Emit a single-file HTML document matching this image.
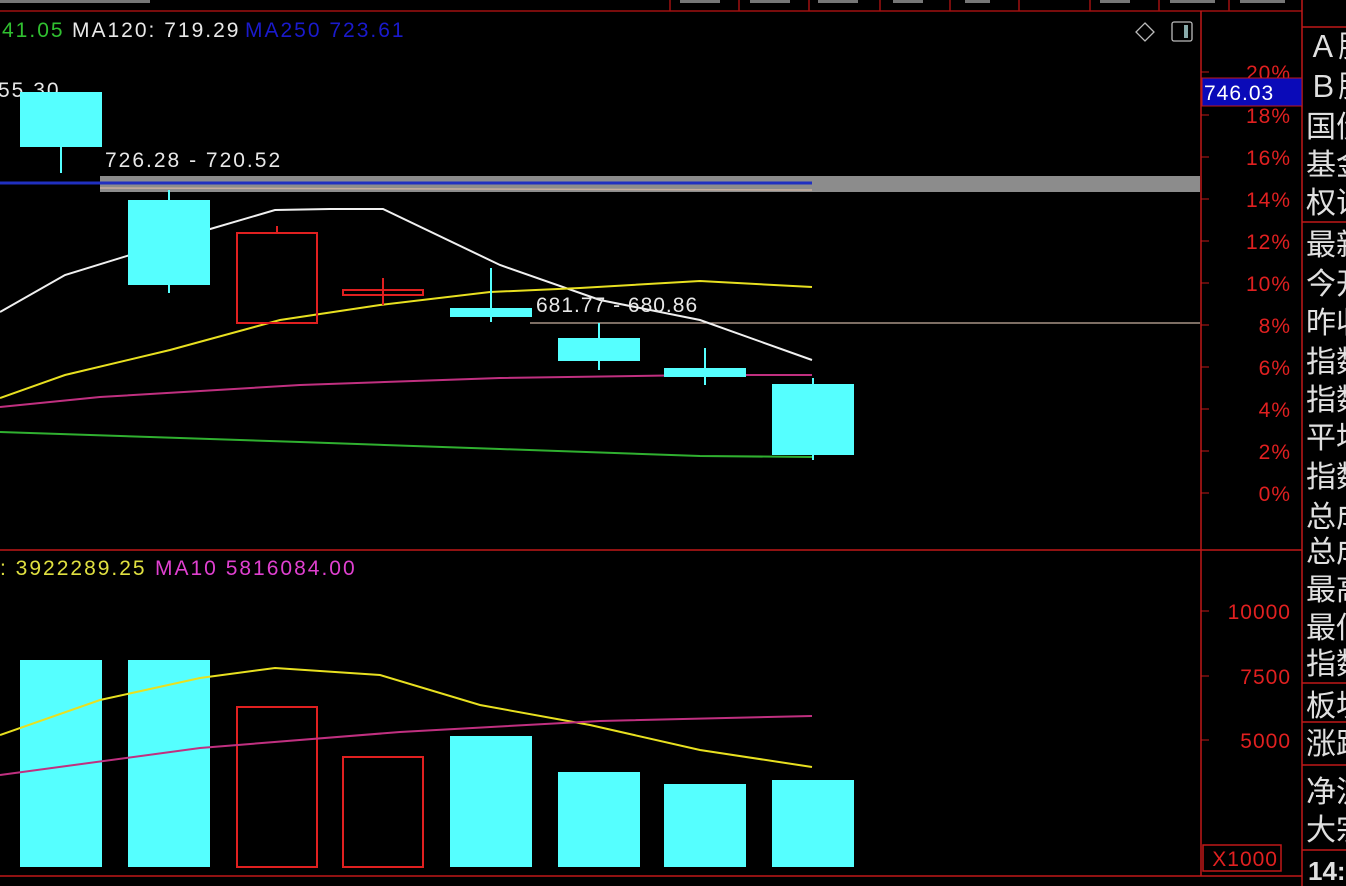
<!DOCTYPE html>
<html><head><meta charset="utf-8"><style>
html,body{margin:0;padding:0;background:#000;width:1346px;height:886px;overflow:hidden}
svg{display:block}
text{font-family:"Liberation Sans","Noto Sans CJK SC",sans-serif}
.ls{letter-spacing:2px}
</style></head><body>
<svg width="1346" height="886" viewBox="0 0 1346 886" xmlns="http://www.w3.org/2000/svg">
<rect width="1346" height="886" fill="#000"/>
<g stroke="#a01010" stroke-width="1.5">
<line x1="0" y1="11" x2="1302" y2="11"/>
<line x1="670" y1="0" x2="670" y2="11"/><line x1="739" y1="0" x2="739" y2="11"/>
<line x1="809" y1="0" x2="809" y2="11"/><line x1="880" y1="0" x2="880" y2="11"/>
<line x1="950" y1="0" x2="950" y2="11"/><line x1="1019" y1="0" x2="1019" y2="11"/>
<line x1="1090" y1="0" x2="1090" y2="11"/><line x1="1159" y1="0" x2="1159" y2="11"/>
<line x1="1229" y1="0" x2="1229" y2="11"/>
</g>
<g fill="#777"><rect x="680" y="0" width="40" height="3"/><rect x="750" y="0" width="40" height="3"/><rect x="818" y="0" width="40" height="3"/><rect x="893" y="0" width="30" height="3"/><rect x="965" y="0" width="25" height="3"/><rect x="1100" y="0" width="30" height="3"/><rect x="1170" y="0" width="45" height="3"/><rect x="1240" y="0" width="45" height="3"/><rect x="0" y="0" width="150" height="3"/></g>
<g stroke="#c01818" stroke-width="1.5" fill="none">
<line x1="1201" y1="11" x2="1201" y2="876"/>
<line x1="1302" y1="0" x2="1302" y2="886"/>
<line x1="0" y1="550" x2="1302" y2="550"/>
<line x1="0" y1="876" x2="1302" y2="876"/>
<line x1="1302" y1="27" x2="1346" y2="27"/>
<line x1="1302" y1="222" x2="1346" y2="222"/>
<line x1="1302" y1="683" x2="1346" y2="683"/>
<line x1="1302" y1="722" x2="1346" y2="722"/>
<line x1="1302" y1="765" x2="1346" y2="765"/>
<line x1="1302" y1="850" x2="1346" y2="850"/>
<rect x="1203" y="845" width="78" height="26"/>
</g>
<g stroke="#c01818" stroke-width="1">
<line x1="1201" y1="72" x2="1209" y2="72"/><line x1="1201" y1="115" x2="1209" y2="115"/><line x1="1201" y1="157" x2="1209" y2="157"/><line x1="1201" y1="199" x2="1209" y2="199"/><line x1="1201" y1="241" x2="1209" y2="241"/><line x1="1201" y1="283" x2="1209" y2="283"/><line x1="1201" y1="325" x2="1209" y2="325"/><line x1="1201" y1="367" x2="1209" y2="367"/><line x1="1201" y1="409" x2="1209" y2="409"/><line x1="1201" y1="451" x2="1209" y2="451"/><line x1="1201" y1="493" x2="1209" y2="493"/>
<line x1="1201" y1="611" x2="1209" y2="611"/><line x1="1201" y1="676" x2="1209" y2="676"/><line x1="1201" y1="740" x2="1209" y2="740"/>
</g>
<g fill="#e02020" font-size="21" text-anchor="end" letter-spacing="1">
<text x="1291" y="80">20%</text><text x="1291" y="123">18%</text><text x="1291" y="165">16%</text><text x="1291" y="207">14%</text><text x="1291" y="249">12%</text><text x="1291" y="291">10%</text><text x="1291" y="333">8%</text><text x="1291" y="375">6%</text><text x="1291" y="417">4%</text><text x="1291" y="459">2%</text><text x="1291" y="501">0%</text>
<text x="1291" y="619">10000</text><text x="1291" y="684">7500</text><text x="1291" y="748">5000</text>
<text x="1278" y="866">X1000</text>
</g>
<rect x="1202" y="78" width="100" height="28" fill="#0a0ab8" stroke="#c01818"/>
<text x="1204" y="100" fill="#fff" font-size="21" letter-spacing="1">746.03</text>
<text x="2" y="37" font-size="21" fill="#30c030" class="ls">41.05</text>
<text x="72" y="37" font-size="21" fill="#e8e8e8" class="ls">MA120: 719.29</text>
<text x="245" y="37" font-size="21" fill="#1a1acc" class="ls">MA250  723.61</text>
<path d="M1145 23 L1154 32 L1145 41 L1136 32 Z" stroke="#bbb" fill="none" stroke-width="1.3"/>
<rect x="1172" y="22" width="20" height="19" rx="2" stroke="#bbb" fill="none" stroke-width="1.3"/>
<rect x="1184" y="25" width="4" height="13" fill="#8aa"/>
<text x="0" y="575" font-size="21" fill="#e0e040" class="ls">: 3922289.25</text>
<text x="155" y="575" font-size="21" fill="#e040d0" class="ls">MA10  5816084.00</text>
<text x="-2" y="97" font-size="21" fill="#e8e8e8" class="ls">55.30</text>
<text x="105" y="167" font-size="21" fill="#e8e8e8" class="ls">726.28 - 720.52</text>
<rect x="100" y="176" width="1100" height="16" fill="#8c8c8c"/>
<line x1="0" y1="183" x2="812" y2="183" stroke="#2030c0" stroke-width="3"/>
<line x1="100" y1="188" x2="812" y2="190" stroke="#c8b0a0" stroke-width="1.5"/>
<line x1="530" y1="323" x2="1200" y2="323" stroke="#c8b0a0" stroke-width="1.3"/>
<g fill="none" stroke-width="2">
<polyline stroke="#f0f0f0" points="0,312 65,275 130,255 200,232 275,210 330,209 383,209 500,265 600,300 700,320 812,360"/>
<polyline stroke="#e8e020" points="0,398 65,375 170,350 280,320 380,305 490,292 580,288 700,281 812,287"/>
<polyline stroke="#c03080" points="0,407 100,397 300,385 500,378 700,375 812,375"/>
<polyline stroke="#30b030" points="0,432 150,437 300,442 500,449 700,456 812,457"/>
</g>
<g stroke="#5ff" stroke-width="2"><line x1="61" y1="147" x2="61" y2="173"/><line x1="169" y1="190" x2="169" y2="293"/><line x1="491" y1="268" x2="491" y2="322"/><line x1="599" y1="323" x2="599" y2="370"/><line x1="705" y1="348" x2="705" y2="385"/><line x1="813" y1="378" x2="813" y2="460"/></g>
<g fill="#5ff">
<rect x="20" y="92" width="82" height="55"/><rect x="128" y="200" width="82" height="85"/>
<rect x="450" y="308" width="82" height="9"/><rect x="558" y="338" width="82" height="23"/>
<rect x="664" y="368" width="82" height="9"/><rect x="772" y="384" width="82" height="71"/>
</g>
<g stroke="#e02020" stroke-width="2" fill="none">
<rect x="237" y="233" width="80" height="90"/><line x1="277" y1="226" x2="277" y2="233"/>
<rect x="343" y="290" width="80" height="5"/><line x1="383" y1="278" x2="383" y2="305"/>
</g>
<text x="536" y="312" font-size="21" fill="#e8e8e8" letter-spacing="1">681.77 - 680.86</text>
<g fill="#5ff">
<rect x="20" y="660" width="82" height="207"/><rect x="128" y="660" width="82" height="207"/>
<rect x="450" y="736" width="82" height="131"/><rect x="558" y="772" width="82" height="95"/>
<rect x="664" y="784" width="82" height="83"/><rect x="772" y="780" width="82" height="87"/>
</g>
<g stroke="#e02020" stroke-width="2" fill="none">
<rect x="237" y="707" width="80" height="160"/><rect x="343" y="757" width="80" height="110"/>
</g>
<g fill="none" stroke-width="2">
<polyline stroke="#e8e020" points="0,735 100,700 200,678 275,668 380,675 480,705 590,725 700,750 812,767"/>
<polyline stroke="#c03080" points="0,775 200,748 400,732 600,721 812,716"/>
</g>
<g fill="#e0e0e0" font-size="30">
<text x="1308" y="57">Ａ股</text><text x="1308" y="97">Ｂ股</text><text x="1306" y="137">国债</text><text x="1306" y="175">基金</text><text x="1306" y="213">权证</text>
<text x="1306" y="255">最新</text><text x="1306" y="294">今开</text><text x="1306" y="333">昨收</text><text x="1306" y="372">指数</text><text x="1306" y="410">指数</text>
<text x="1306" y="448">平均</text><text x="1306" y="487">指数</text><text x="1306" y="527">总成</text><text x="1306" y="562">总成</text><text x="1306" y="600">最高</text>
<text x="1306" y="638">最低</text><text x="1306" y="674">指数</text><text x="1306" y="716">板块</text><text x="1306" y="754">涨跌</text><text x="1306" y="802">净流</text>
<text x="1306" y="840">大宗</text><text x="1308" y="880" font-weight="bold" font-size="26">14:</text>
</g>
</svg>
</body></html>
